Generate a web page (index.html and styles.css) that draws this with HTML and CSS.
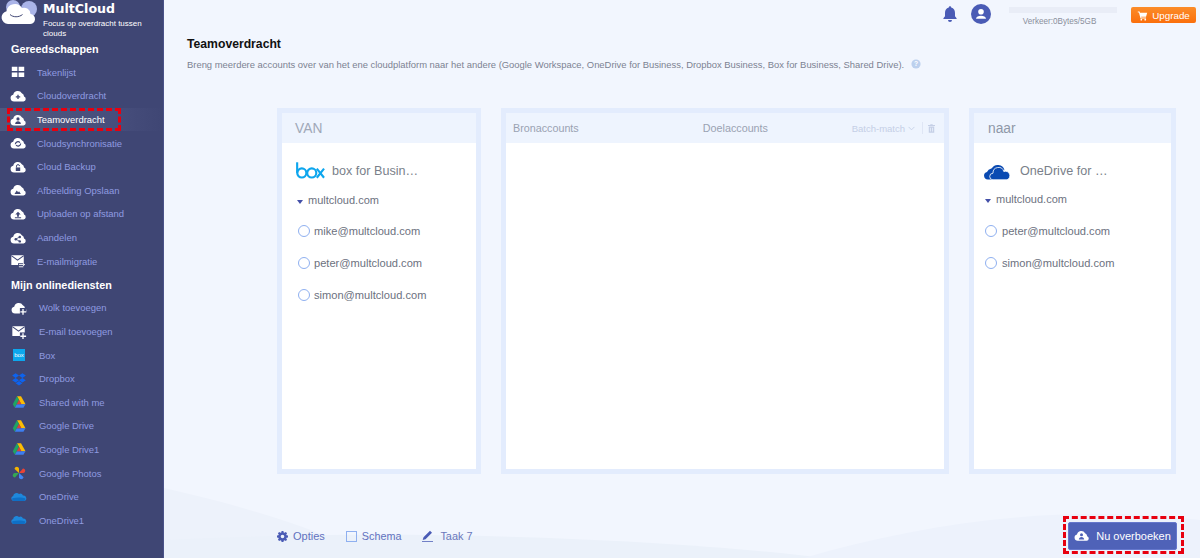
FILE: index.html
```html
<!DOCTYPE html>
<html lang="nl">
<head>
<meta charset="utf-8">
<title>MultCloud</title>
<link rel="stylesheet" href="styles.css">
</head>
<body>
<svg width="0" height="0" class="defs">
  <defs>
    <path id="cloud" d="M4.500 15.200a3.800 3.800 0 0 1-.9-7.500A5.200 5.200 0 0 1 13.300 6a4 4 0 0 1 2.500 3.600 2.900 2.900 0 0 1-.6 5.600z"/>
    <g id="gdrive"><path d="M5.200 1h4.600l5 9h-4.600z" fill="#fbbc04"/><path d="M5.200 1l2.300 4.100L2.900 13.900.5 10z" fill="#1fa463"/><path d="M5 10h9.800l-2.300 4H2.900z" fill="#3d7ef0"/><path d="M7.500 5.100l2.600 4.900H5z" fill="#ea4335" opacity=".9"/></g>
    <g id="odrive"><path d="M3 13.500a2.800 2.800 0 0 1-.6-5.500 4 4 0 0 1 6.600-2.500 3.400 3.400 0 0 1 4.500 1.800 3.200 3.200 0 0 1 1.500 6.200z" fill="#1e88dc"/><path d="M3 13.500h12a2.500 2.500 0 0 0 1-2.800c-3-1.500-9-1.500-14.600-.4A2.600 2.600 0 0 0 3 13.500z" fill="#0f6fc6"/></g>
  </defs>
</svg>
<div class="app">
  <aside class="sidebar">
    <header class="brand">
      <svg class="brand-logo" viewBox="0 0 38 28"><ellipse cx="29" cy="10" rx="8" ry="8" fill="#aab4e8"/><circle cx="13" cy="8" r="7" fill="#aab4e8"/><path d="M8 25a6.500 6.500 0 0 1-1.500-12.800A8.500 8.500 0 0 1 22 9a6.500 6.500 0 0 1 8.500 6 5 5 0 0 1-1 10z" fill="#fff"/><path d="M10 15.500c3 3 9 3 12.500 0" fill="none" stroke="#3f4674" stroke-width="1"/></svg>
      <div class="brand-text">
        <div class="brand-name">MultCloud</div>
        <div class="brand-tag">Focus op overdracht tussen clouds</div>
      </div>
    </header>
    <h2 class="side-title first">Gereedschappen</h2>
    <nav class="side-list">
      <a class="side-item"><svg class="ico" viewBox="0 0 18 18"><path fill="#fff" d="M2 3h6.300v5H2zM9.700 3H16v5H9.700zM2 9.600h6.300v5H2zM9.700 9.600H16v5H9.700z"/></svg>Takenlijst</a>
      <a class="side-item"><svg class="ico" viewBox="0 0 18 18"><use href="#cloud" fill="#fff"/><path d="M9 7.500v5M6.500 10H11.500" stroke="#3f4674" stroke-width="1.500"/></svg>Cloudoverdracht</a>
      <a class="side-item active"><svg class="ico" viewBox="0 0 18 18"><use href="#cloud" fill="#fff"/><circle cx="9" cy="7.800" r="1.800" fill="#3f4674"/><path d="M5.800 13.500c0-4 6.400-4 6.400 0z" fill="#3f4674"/></svg>Teamoverdracht</a>
      <a class="side-item"><svg class="ico" viewBox="0 0 18 18"><use href="#cloud" fill="#fff"/><path d="M6 10.500a3 3 0 0 1 5.200-2M12 9.500a3 3 0 0 1-5.200 2" fill="none" stroke="#3f4674" stroke-width="1.300"/></svg>Cloudsynchronisatie</a>
      <a class="side-item"><svg class="ico" viewBox="0 0 18 18"><use href="#cloud" fill="#fff"/><path d="M6.500 9.500h5v4h-5z" fill="#3f4674"/><path d="M7.300 9.500V8a1.700 1.700 0 0 1 3.400 0" fill="none" stroke="#3f4674" stroke-width="1.100"/></svg>Cloud Backup</a>
      <a class="side-item"><svg class="ico" viewBox="0 0 18 18"><use href="#cloud" fill="#fff"/><path d="M5 13.500l2.600-4 1.600 2 1-1.200 2 3.200z" fill="#3f4674"/></svg>Afbeelding Opslaan</a>
      <a class="side-item"><svg class="ico" viewBox="0 0 18 18"><use href="#cloud" fill="#fff"/><path d="M9 6.500l3 3.200h-2v2.300H8V9.700H6zM5.500 12.700h7v1.100h-7z" fill="#3f4674"/></svg>Uploaden op afstand</a>
      <a class="side-item"><svg class="ico" viewBox="0 0 18 18"><use href="#cloud" fill="#fff"/><g fill="#3f4674"><circle cx="6.500" cy="10.300" r="1.400"/><circle cx="11" cy="7.800" r="1.400"/><circle cx="11" cy="12.800" r="1.400"/></g><path d="M6.500 10.300L11 7.800M6.500 10.300l4.500 2.500" stroke="#3f4674" stroke-width=".9"/></svg>Aandelen</a>
      <a class="side-item"><svg class="ico" viewBox="0 0 18 18"><path d="M1.500 2.500h14v11h-14z" fill="#fff"/><path d="M1.500 3l7 5 7-5" fill="none" stroke="#3f4674" stroke-width="1.200"/><path d="M9 11.500h8.500v5H9z" fill="#3f4674"/><path d="M10 13h6M14.500 11.500l2 1.500-2 1.500M10 15.500h5" fill="none" stroke="#fff" stroke-width="1"/></svg>E-mailmigratie</a>
    </nav>
    <h2 class="side-title">Mijn onlinediensten</h2>
    <nav class="side-list svc">
      <a class="side-item"><svg class="ico" viewBox="0 0 18 18"><use href="#cloud" fill="#fff"/><path d="M10 9h7.500v8H10z" fill="#3f4674"/><path d="M13.500 10v6.500M10.500 13.300h6.500" stroke="#fff" stroke-width="1.500"/></svg>Wolk toevoegen</a>
      <a class="side-item"><svg class="ico" viewBox="0 0 18 18"><path d="M1.500 2.500h14v11h-14z" fill="#fff"/><path d="M1.500 3l7 5 7-5" fill="none" stroke="#3f4674" stroke-width="1.200"/><path d="M10 9.500h7.500v8H10z" fill="#3f4674"/><path d="M13.500 10.500v6.500M10.500 13.800h6.500" stroke="#fff" stroke-width="1.500"/></svg>E-mail toevoegen</a>
      <a class="side-item"><span class="box-badge">box</span>Box</a>
      <a class="side-item"><svg class="ico" viewBox="0 0 18 18"><path fill="#0d63ef" d="M5.200 2.500L1.300 5.200l3.900 2.600L9 5.200zM12.800 2.500L9 5.200l3.800 2.600 3.900-2.600zM1.300 10.400l3.900 2.600L9 10.400 5.200 7.800zM12.800 7.800L9 10.400l3.800 2.600 3.900-2.600zM5.200 13.800L9 16.300l3.800-2.500L9 11.200z"/></svg>Dropbox</a>
      <a class="side-item"><svg class="ico" viewBox="-1.500 -1.500 18 18"><use href="#gdrive"/></svg>Shared with me</a>
      <a class="side-item"><svg class="ico" viewBox="-1.500 -1.500 18 18"><use href="#gdrive"/></svg>Google Drive</a>
      <a class="side-item"><svg class="ico" viewBox="-1.500 -1.500 18 18"><use href="#gdrive"/></svg>Google Drive1</a>
      <a class="side-item"><svg class="ico" viewBox="-1 -1 20 20"><path d="M9 9V3.500a2.800 2.800 0 0 0-5.500 0V4z" fill="#f4b400"/><path d="M9 9h5.500a2.800 2.800 0 0 0 0-5.500H14z" fill="#ea4335"/><path d="M9 9v5.500a2.800 2.800 0 0 0 5.500 0V14z" fill="#4285f4"/><path d="M9 9H3.500a2.800 2.800 0 0 0 0 5.500H4z" fill="#34a853"/></svg>Google Photos</a>
      <a class="side-item"><svg class="ico" viewBox="0 0 18 18"><use href="#odrive"/></svg>OneDrive</a>
      <a class="side-item"><svg class="ico" viewBox="0 0 18 18"><use href="#odrive"/></svg>OneDrive1</a>
    </nav>
  </aside>

  <main class="main">
    <svg class="waves" viewBox="0 0 1036 70" preserveAspectRatio="none"><path d="M0 0C80 18 150 40 215 70H0z" fill="#edf2fb"/><path d="M0 52C230 40 500 50 660 70H0z" fill="#ebf1fa"/><path d="M640 70C760 35 900 15 1036 32V70z" fill="#edf2fc"/></svg>
    <div class="topbar">
      <svg class="bell" viewBox="0 0 16 18"><path fill="#4a5bb5" d="M8 1.200a1.200 1.200 0 0 1 1.200 1.300C11.800 3.100 13 5.200 13 8v3.300l1.600 2v.7H1.400v-.7L3 11.300V8c0-2.800 1.200-4.900 3.800-5.500A1.200 1.200 0 0 1 8 1.200zM6 15h4a2 2 0 0 1-4 0z"/></svg>
      <svg class="avatar" viewBox="0 0 20 20"><circle cx="10" cy="10" r="10" fill="#4a5bb5"/><circle cx="10" cy="7.800" r="2.800" fill="#fff"/><path d="M5 14.800c0-4 10-4 10 0z" fill="#fff"/></svg>
      <div class="traffic">
        <div class="traffic-bar"></div>
        <div class="traffic-text">Verkeer:0Bytes/5GB</div>
      </div>
      <button class="upgrade"><svg class="cart" viewBox="0 0 14 14"><path fill="#fff" d="M1 2h2.300l.5 1.500H13l-1.500 5H5.200l.3 1h6v1.200H4.500L2.500 3.200H1z"/><circle cx="5.500" cy="12.300" r="1.100" fill="#fff"/><circle cx="10.500" cy="12.300" r="1.100" fill="#fff"/></svg>Upgrade</button>
    </div>
    <div class="page-head">
      <h1 class="page-title">Teamoverdracht</h1>
      <p class="page-desc">Breng meerdere accounts over van het ene cloudplatform naar het andere (Google Workspace, OneDrive for Business, Dropbox Business, Box for Business, Shared Drive).<svg class="help" viewBox="0 0 12 12"><circle cx="6" cy="6" r="5.500" fill="#bcd0ee"/><text x="6" y="8.800" text-anchor="middle" class="help-q">?</text></svg></p>
    </div>
    <section class="panels">
      <div class="panel panel-from">
        <div class="panel-head"><span class="head-label">VAN</span></div>
        <div class="panel-body">
          <div class="cloud-name"><svg class="box-logo" viewBox="0 0 30 17"><g fill="none" stroke="#0da6ee" stroke-width="2.200"><path d="M1.200 0v11"/><circle cx="6" cy="11" r="4.700"/><circle cx="16.300" cy="11" r="4.700"/><path d="M21.500 6.500l7.500 9.500M29 6.500l-7.500 9.500"/></g></svg><span>box for Busin…</span></div>
          <div class="domain"><i class="caret"></i>multcloud.com</div>
          <ul class="accounts">
            <li><i class="radio"></i>mike@multcloud.com</li>
            <li><i class="radio"></i>peter@multcloud.com</li>
            <li><i class="radio"></i>simon@multcloud.com</li>
          </ul>
        </div>
      </div>
      <div class="panel panel-mid">
        <div class="panel-head mid-head">
          <span class="mid-label src">Bronaccounts</span>
          <span class="mid-label dst">Doelaccounts</span>
          <span class="batch">Batch-match<svg class="chev" viewBox="0 0 8 5"><path d="M.7.7L4 4l3.300-3.300" fill="none" stroke="#c5cfe6" stroke-width="1"/></svg></span>
          <i class="sep"></i>
          <svg class="trash" viewBox="0 0 9 11"><path fill="#c5cfe6" d="M3 0h3v1h3v1.200H0V1h3zM1 3h7v8H1zm1.500 1.500v5h1v-5zm3 0v5h1v-5z"/></svg>
        </div>
        <div class="panel-body"></div>
      </div>
      <div class="panel panel-to">
        <div class="panel-head"><span class="head-label naar">naar</span></div>
        <div class="panel-body">
          <div class="cloud-name od"><svg class="od-logo" viewBox="0 0 27 18"><path fill="#0a4ab2" d="M7.500 6.800A7 7 0 0 1 20.500 8.200L12 10z"/><path fill="#0a4ab2" d="M3.800 17.500A3.800 3.800 0 0 1 3 10 5.500 5.500 0 0 1 12.500 8.500L9 17.500z"/><path fill="#0a4ab2" stroke="#fff" stroke-width=".8" d="M9 17.800A3.300 3.300 0 0 1 9 11.200 5.500 5.500 0 0 1 19.800 9.500 4.100 4.100 0 0 1 23 17.800z"/></svg><span>OneDrive for …</span></div>
          <div class="domain"><i class="caret"></i>multcloud.com</div>
          <ul class="accounts">
            <li><i class="radio"></i>peter@multcloud.com</li>
            <li><i class="radio"></i>simon@multcloud.com</li>
          </ul>
        </div>
      </div>
    </section>
    <footer class="actions">
      <a class="action opt"><svg class="act-ico" viewBox="0 0 12 12"><path fill="#4a5bb5" fill-rule="evenodd" d="M5 0h2l.3 1.500 1 .4L9.600 1 11 2.400l-.9 1.300.4 1L12 5v2l-1.500.3-.4 1 .9 1.300L9.600 11l-1.300-.9-1 .4L7 12H5l-.3-1.500-1-.4-1.300.9L1 9.600l.9-1.300-.4-1L0 7V5l1.500-.3.4-1L1 2.400 2.400 1l1.300.9 1-.4zM6 4a2 2 0 1 0 0 4 2 2 0 0 0 0-4z"/></svg>Opties</a>
      <a class="action sched"><i class="check"></i>Schema</a>
      <a class="action task"><svg class="act-ico pen" viewBox="0 0 12 12"><path fill="#4a5bb5" d="M8.500.7l2 2L4 9.200l-2.800.8.800-2.800zM.5 11h11v.8H.5z"/></svg>Taak 7</a>
      <button class="go"><svg class="go-ico" viewBox="0 0 18 18"><use href="#cloud" fill="#fff" transform="translate(0 -1)"/><circle cx="9" cy="6.800" r="1.800" fill="#4f62b8"/><path d="M5.800 12.500c0-4 6.400-4 6.400 0z" fill="#4f62b8"/></svg>Nu overboeken</button>
    </footer>
  </main>
</div>
<div class="mark mark-nav"></div>
<div class="mark mark-go"></div>
</body>
</html>
```
FILE: styles.css
```css
* { box-sizing: border-box; }
html, body { margin: 0; height: 558px; overflow: hidden; }
body { font-family: "Liberation Sans", Arial, sans-serif; background: #f2f6fe; position: relative; }
.defs { position: absolute; }
.app { display: flex; height: 558px; }

.sidebar { width: 164px; flex: none; background: #3f4674; color: #fff; border-right: 1px solid #4a5288; }
.brand { display: flex; height: 41px; }
.brand-logo { width: 38px; height: 28px; margin-top: -1px; flex: none; }
.brand-text { margin-left: 5px; }
.brand-name { font: 700 12.6px/14px "DejaVu Sans", sans-serif; margin-top: 2px; height: 17px; }
.brand-tag { font-size: 8px; line-height: 9.5px; width: 112px; }
.side-title { margin: 0; font-size: 10.8px; line-height: 14px; font-weight: 700; padding-left: 11px; }
.side-title.first { margin-top: 1px; }
.side-list { display: flex; flex-direction: column; margin: 4.6px 0 4.6px; }
.side-item { display: flex; align-items: center; height: 23.6px; font-size: 9.45px; color: #8f9be0; padding-left: 10px; }
.side-item.active { color: #fff; background: linear-gradient(90deg, #50587f, #474e7c 70%, #3f4674); }
.ico { width: 16px; height: 16px; flex: none; margin-right: 11px; }
.svc .ico { margin-right: 12px; margin-left: 1px; }
.box-badge { width: 12px; height: 12px; margin: 0 14px 0 3px; background: #0ca7ee; color: #fff; font-size: 6px; line-height: 12px; text-align: center; flex: none; }

.main { flex: 1; position: relative; min-width: 0; display: flex; flex-direction: column; }
.waves { position: absolute; left: 0; bottom: 0; width: 100%; height: 70px; }
.topbar { position: relative; height: 28px; display: flex; align-items: flex-start; padding-top: 4px; padding-left: 778px; }
.bell { width: 16px; height: 18px; margin-top: 1px; }
.avatar { width: 20px; height: 20px; margin-left: 13px; }
.traffic { margin-left: 18px; width: 108px; padding-top: 3px; }
.traffic-bar { height: 6px; background: #e9edf7; }
.traffic-text { font-size: 8.15px; color: #8a8f9c; text-align: center; line-height: 11px; margin-top: 3px; padding-right: 7px; }
.upgrade { margin-left: 14px; width: 65px; height: 16px; margin-top: 3px; border: 0; border-radius: 2px; background: linear-gradient(#fb8c2a, #fb6f0c); color: #fff; font: 9.8px "Liberation Sans", sans-serif; display: flex; align-items: center; justify-content: center; padding: 0; }
.cart { width: 11px; height: 11px; margin-right: 4px; }

.page-head { position: relative; padding: 9px 0 0 23px; }
.page-title { margin: 0; font-size: 12.2px; line-height: 14px; font-weight: 700; color: #111; }
.page-desc { margin: 7px 0 0; font-size: 9.42px; line-height: 13px; color: #7c8292; white-space: nowrap; }
.help { width: 10px; height: 10px; margin-left: 7px; vertical-align: -1px; }
.help-q { font-size: 8px; fill: #fff; font-weight: 700; }

.panels { position: relative; display: flex; margin: 37px 0 0 113px; height: 366px; }
.panel { border: 5px solid #e3ecfd; background: #fff; display: flex; flex-direction: column; }
.panel-from { width: 204px; margin-right: 20px; }
.panel-mid { width: 448px; margin-right: 20px; }
.panel-to { width: 207px; }
.panel-head { height: 30px; background: #eef4fe; display: flex; align-items: center; flex: none; padding-left: 13px; }
.head-label { font-size: 13.8px; color: #a0a8b8; }
.head-label.naar { color: #8f98a8; padding-left: 1px; }
.panel-body { flex: 1; }
.mid-head { padding-left: 7px; padding-right: 9px; }
.mid-label { font-size: 10.75px; color: #9aa2b2; }
.mid-label.src { width: 190px; }
.mid-label.dst { width: 149px; }
.batch { font-size: 9.5px; color: #c5cfe6; display: flex; align-items: center; white-space: nowrap; }
.chev { width: 7px; height: 5px; margin-left: 3px; }
.sep { width: 1px; height: 12px; background: #dfe6f5; margin: 0 5px 0 7px; }
.trash { width: 7px; height: 9px; }

.cloud-name { display: flex; align-items: center; height: 17px; margin: 19px 0 0 14px; font-size: 12.6px; color: #7a7f8a; white-space: nowrap; }
.box-logo { width: 29px; height: 17px; margin-right: 7px; }
.cloud-name.od { margin-left: 10px; }
.od-logo { width: 27px; height: 18px; margin-right: 9px; flex: none; }
.domain { display: flex; align-items: center; font-size: 11px; line-height: 13px; color: #6c7180; margin: 15px 0 0 15px; }
.panel-to .domain { margin: 14px 0 0 11px; }
.caret { width: 0; height: 0; border: 3.500px solid transparent; border-top: 4px solid #4450a8; border-bottom: 0; margin: 3px 5px 0 0; }
.accounts { list-style: none; margin: 8.5px 0 0 16px; padding: 0; }
.panel-to .accounts { margin: 9px 0 0 11px; }
.accounts li { display: flex; align-items: center; height: 31.7px; font-size: 11.1px; color: #6c7180; }
.radio { width: 12px; height: 12px; border: 1.5px solid #8fb0f0; border-radius: 50%; margin-right: 4px; flex: none; }
.panel-to .radio { margin-right: 5px; }

.actions { position: relative; display: flex; align-items: center; height: 34px; margin-top: 45px; padding-left: 113px; }
.action { display: flex; align-items: center; font-size: 10.9px; color: #6272c0; }
.opt { font-size: 11px; }
.act-ico { width: 11px; height: 11px; margin-right: 5px; }
.act-ico.pen { width: 13px; height: 12px; margin-right: 6px; }
.sched { margin-left: 21px; font-size: 10.8px; }
.task { margin-left: 20px; color: #6a78bc; }
.check { width: 11px; height: 11px; border: 1px solid #8fb0f0; margin-right: 5px; }
.go { position: absolute; left: 904px; top: 3px; width: 109px; height: 28px; border: 1px solid #6577cc; border-radius: 2px; background: #4f62b8; color: #fff; font: 11px "Liberation Sans", sans-serif; display: flex; align-items: center; justify-content: center; padding: 0; }
.go-ico { width: 15px; height: 15px; margin-right: 7px; }

.mark { position: absolute; border: 3px dashed #e8000f; }
.mark-nav { left: 7px; top: 108px; width: 114px; height: 23px; }
.mark-go { left: 1063px; top: 516px; width: 121px; height: 38px; }
```
